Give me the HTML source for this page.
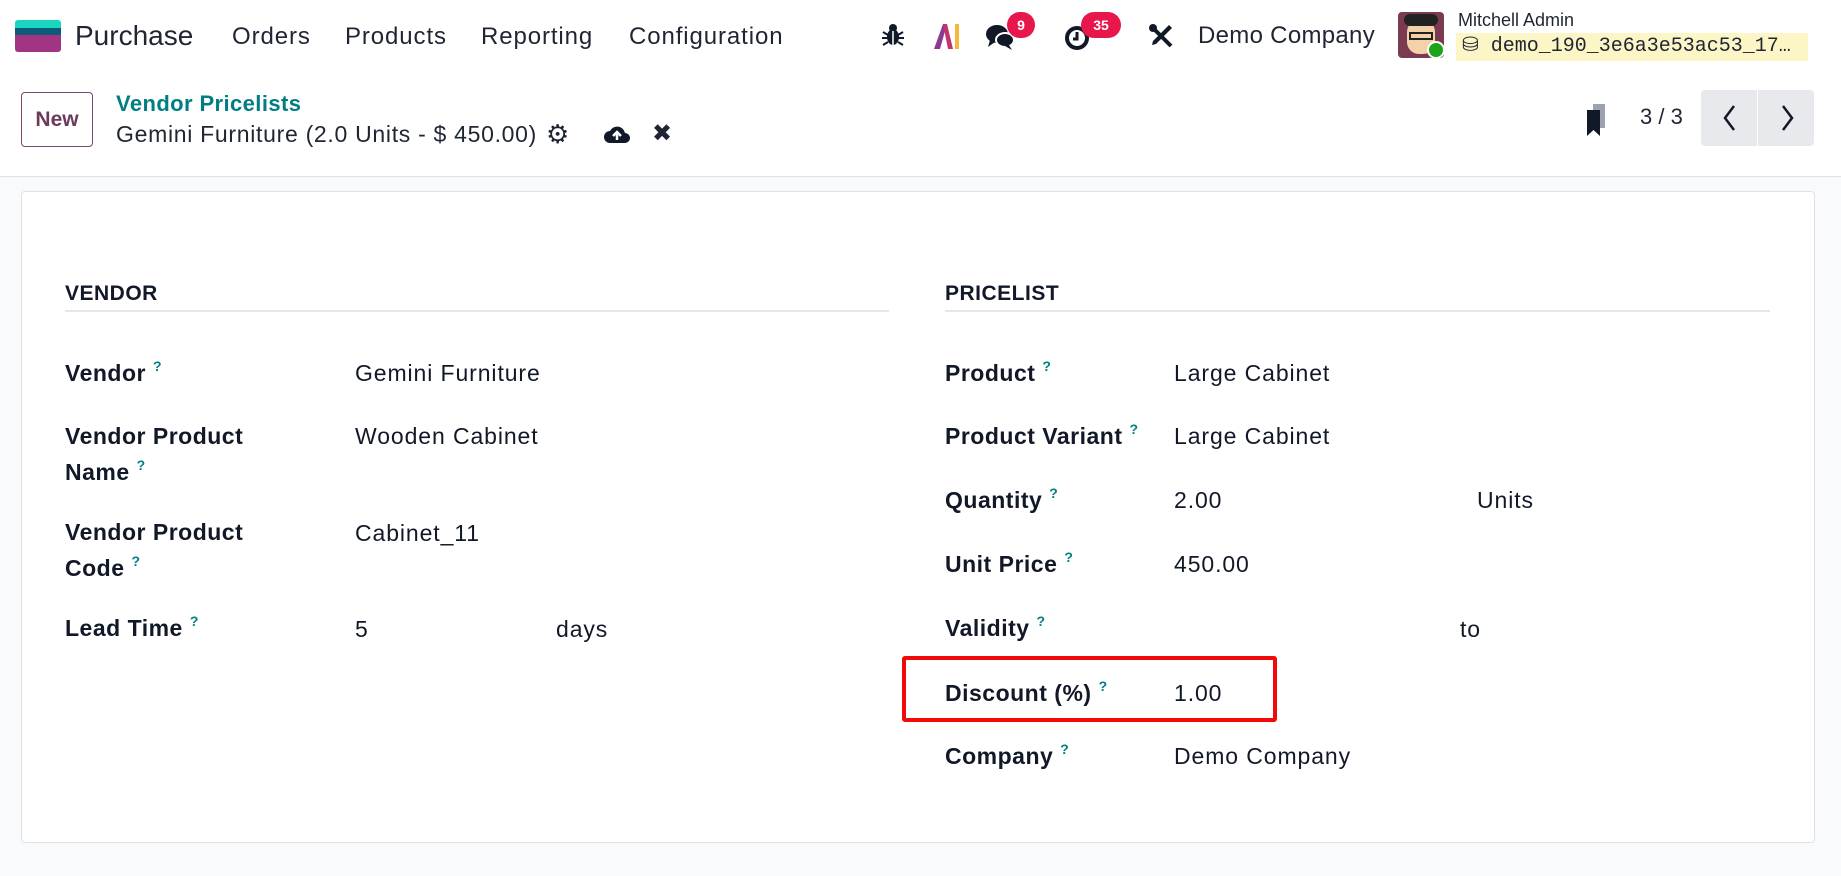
<!DOCTYPE html>
<html><head><meta charset="utf-8"><style>
*{box-sizing:border-box;margin:0;padding:0}
body{width:1841px;height:876px;overflow:hidden;background:#f9fafb;font-family:"Liberation Sans","DejaVu Sans",sans-serif;color:#1f2533;position:relative}
.a{position:absolute;white-space:nowrap;line-height:30px}
.top{position:absolute;left:0;top:0;width:1841px;height:177px;background:#fff;border-bottom:1px solid #dee2e6}
.nav{font-size:24px;letter-spacing:0.9px;color:#1f2533}
.card{position:absolute;left:21px;top:191px;width:1794px;height:652px;background:#fff;border:1px solid #dee2e6;border-radius:4px}
.h{font-weight:bold;font-size:21px;letter-spacing:0.5px;color:#111827}
.l{font-weight:bold;font-size:23px;letter-spacing:0.5px;color:#111827}
.v{font-size:23px;letter-spacing:0.9px;color:#111827}
sup{color:#017e84;font-size:14px;font-weight:bold;margin-left:7px;vertical-align:baseline;position:relative;top:-10px;line-height:0}
.badge{position:absolute;background:#e8174b;color:#fff;font-size:14px;font-weight:bold;border-radius:14px;height:26px;line-height:26px;text-align:center}
</style></head><body>
<div class="top"></div>
<div style="position:absolute;left:15px;top:20px;width:46px;height:32px;border-radius:3px;overflow:hidden">
<div style="height:8px;background:#1ad6c0"></div><div style="height:7px;background:#0b5a78"></div><div style="height:17px;background:#a23582"></div></div>
<div class="a" style="left:75px;top:20px;font-size:28px;line-height:32px">Purchase</div>
<div class="a nav" style="left:232px;top:22px">Orders</div>
<div class="a nav" style="left:345px;top:22px">Products</div>
<div class="a nav" style="left:481px;top:22px">Reporting</div>
<div class="a nav" style="left:629px;top:22px">Configuration</div>
<svg class="a" style="left:881px;top:22px" width="24" height="26" viewBox="0 0 24 26"><ellipse cx="12" cy="15" rx="6" ry="8" fill="#111827"/><circle cx="12" cy="6" r="4" fill="#111827"/><path d="M2 10l5 3M22 10l-5 3M1 16h6M23 16h-6M2 23l5-3M22 23l-5-3" stroke="#111827" stroke-width="2"/><path d="M12 9v14" stroke="#fff" stroke-width="1.5"/></svg>
<svg class="a" style="left:932px;top:22px" width="30" height="28" viewBox="0 0 30 28"><path d="M2 27L11 2h4l-7 25z" fill="#8b3a8f"/><path d="M11 2h4l6 25h-5z" fill="#c2336f"/><rect x="23" y="2" width="4" height="25" fill="#f6b93b"/></svg>
<svg class="a" style="left:985px;top:22px" width="32" height="30" viewBox="0 0 32 30"><ellipse cx="12" cy="12" rx="11" ry="9" fill="#111827"/><path d="M5 18l-2 7 7-5z" fill="#111827"/><ellipse cx="20" cy="18" rx="9" ry="7" fill="#111827" stroke="#fff" stroke-width="2"/><path d="M24 23l3 5-7-4z" fill="#111827"/></svg>
<div class="badge" style="left:1007px;top:12px;width:28px">9</div>
<svg class="a" style="left:1064px;top:24px" width="28" height="28" viewBox="0 0 28 28"><circle cx="13" cy="14" r="10" fill="none" stroke="#111827" stroke-width="4"/><path d="M13 8v7h-4" stroke="#111827" stroke-width="3" fill="none"/></svg>
<div class="badge" style="left:1081px;top:12px;width:40px">35</div>
<svg class="a" style="left:1147px;top:22px" width="28" height="28" viewBox="0 0 28 28"><path d="M4 4l20 20" stroke="#111827" stroke-width="4"/><path d="M22 3l3 3-16 16-4 1 1-4z" fill="#111827"/><circle cx="6" cy="6" r="4" fill="#111827"/></svg>
<div class="a nav" style="left:1198px;top:21px;letter-spacing:0.3px">Demo Company</div>
<div style="position:absolute;left:1398px;top:12px;width:46px;height:46px;border-radius:4px;background:#7a3a52;overflow:hidden">
<div style="position:absolute;left:9px;top:8px;width:28px;height:34px;border-radius:12px;background:#f3d2a8"></div>
<div style="position:absolute;left:6px;top:2px;width:34px;height:12px;border-radius:6px;background:#222"></div>
<div style="position:absolute;left:11px;top:20px;width:24px;height:8px;border:2px solid #222"></div></div>
<div style="position:absolute;left:1427px;top:41px;width:18px;height:18px;border-radius:50%;background:#1aa51a;border:2px solid #fff"></div>
<div class="a" style="left:1458px;top:5px;font-size:18px">Mitchell Admin</div>
<div style="position:absolute;left:1456px;top:33px;width:352px;height:28px;background:#fcf6c6"></div>
<div class="a" style="left:1462px;top:32px;font-size:20px;font-family:'Liberation Mono',monospace">&#9921; demo_190_3e6a3e53ac53_17…</div>
<div style="position:absolute;left:21px;top:92px;width:72px;height:55px;border:1px solid #7c4a6f;border-radius:4px;color:#6b3a5c;font-size:21px;font-weight:bold;text-align:center;line-height:53px">New</div>
<div class="a" style="left:116px;top:89px;font-size:22px;letter-spacing:0.4px;font-weight:bold;color:#017e84">Vendor Pricelists</div>
<div class="a" style="left:116px;top:119px;font-size:23px;letter-spacing:0.7px">Gemini Furniture (2.0 Units - $ 450.00)</div>
<div class="a" style="left:546px;top:119px;font-size:26px">&#9881;</div>
<svg class="a" style="left:603px;top:122px" width="28" height="24" viewBox="0 0 28 24"><path d="M7 21a6 6 0 0 1 0-12 8 8 0 0 1 15 2 5 5 0 0 1 0 10z" fill="#111827"/><path d="M14 18v-7M10 14l4-4 4 4" stroke="#fff" stroke-width="2.5" fill="none"/></svg>
<div class="a" style="left:652px;top:119px;font-size:24px;font-weight:bold">&#10006;</div>
<svg class="a" style="left:1585px;top:102px" width="24" height="36" viewBox="0 0 24 36"><rect x="8" y="2" width="12" height="24" fill="#9ca3af"/><path d="M2 8h13v26l-6.5-6-6.5 6z" fill="#111827"/></svg>
<div class="a" style="left:1640px;top:102px;font-size:22px">3 / 3</div>
<div style="position:absolute;left:1701px;top:90px;width:56px;height:56px;background:#e7e9ed;border-radius:4px 0 0 4px"></div>
<div style="position:absolute;left:1758px;top:90px;width:56px;height:56px;background:#e7e9ed;border-radius:0 4px 4px 0"></div>
<svg class="a" style="left:1720px;top:103px" width="20" height="30" viewBox="0 0 20 30"><path d="M14 3L5 15l9 12" stroke="#111827" stroke-width="2.5" fill="none"/></svg>
<svg class="a" style="left:1777px;top:103px" width="20" height="30" viewBox="0 0 20 30"><path d="M6 3l9 12-9 12" stroke="#111827" stroke-width="2.5" fill="none"/></svg>
<div class="card"></div>
<div class="a h" style="left:65px;top:279px">VENDOR</div>
<div style="position:absolute;left:65px;top:310px;width:824px;height:2px;background:#e5e7eb"></div>
<div class="a h" style="left:945px;top:279px">PRICELIST</div>
<div style="position:absolute;left:945px;top:310px;width:825px;height:2px;background:#e5e7eb"></div>

<div class="a l" style="left:65px;top:358px">Vendor<sup>?</sup></div>
<div class="a v" style="left:355px;top:358px">Gemini Furniture</div>
<div class="a l" style="left:65px;top:421px">Vendor Product</div>
<div class="a l" style="left:65px;top:457px">Name<sup>?</sup></div>
<div class="a v" style="left:355px;top:421px">Wooden Cabinet</div>
<div class="a l" style="left:65px;top:517px">Vendor Product</div>
<div class="a l" style="left:65px;top:553px">Code<sup>?</sup></div>
<div class="a v" style="left:355px;top:518px">Cabinet_11</div>
<div class="a l" style="left:65px;top:613px">Lead Time<sup>?</sup></div>
<div class="a v" style="left:355px;top:614px">5</div>
<div class="a v" style="left:556px;top:614px">days</div>

<div class="a l" style="left:945px;top:358px">Product<sup>?</sup></div>
<div class="a v" style="left:1174px;top:358px">Large Cabinet</div>
<div class="a l" style="left:945px;top:421px">Product Variant<sup>?</sup></div>
<div class="a v" style="left:1174px;top:421px">Large Cabinet</div>
<div class="a l" style="left:945px;top:485px">Quantity<sup>?</sup></div>
<div class="a v" style="left:1174px;top:485px">2.00</div>
<div class="a v" style="left:1477px;top:485px">Units</div>
<div class="a l" style="left:945px;top:549px">Unit Price<sup>?</sup></div>
<div class="a v" style="left:1174px;top:549px">450.00</div>
<div class="a l" style="left:945px;top:613px">Validity<sup>?</sup></div>
<div class="a v" style="left:1460px;top:614px">to</div>
<div class="a l" style="left:945px;top:678px">Discount (%)<sup>?</sup></div>
<div class="a v" style="left:1174px;top:678px">1.00</div>
<div class="a l" style="left:945px;top:741px">Company<sup>?</sup></div>
<div class="a v" style="left:1174px;top:741px">Demo Company</div>
<div style="position:absolute;left:902px;top:656px;width:375px;height:66px;border:4px solid #f20a0a;border-radius:3px"></div>
</body></html>
